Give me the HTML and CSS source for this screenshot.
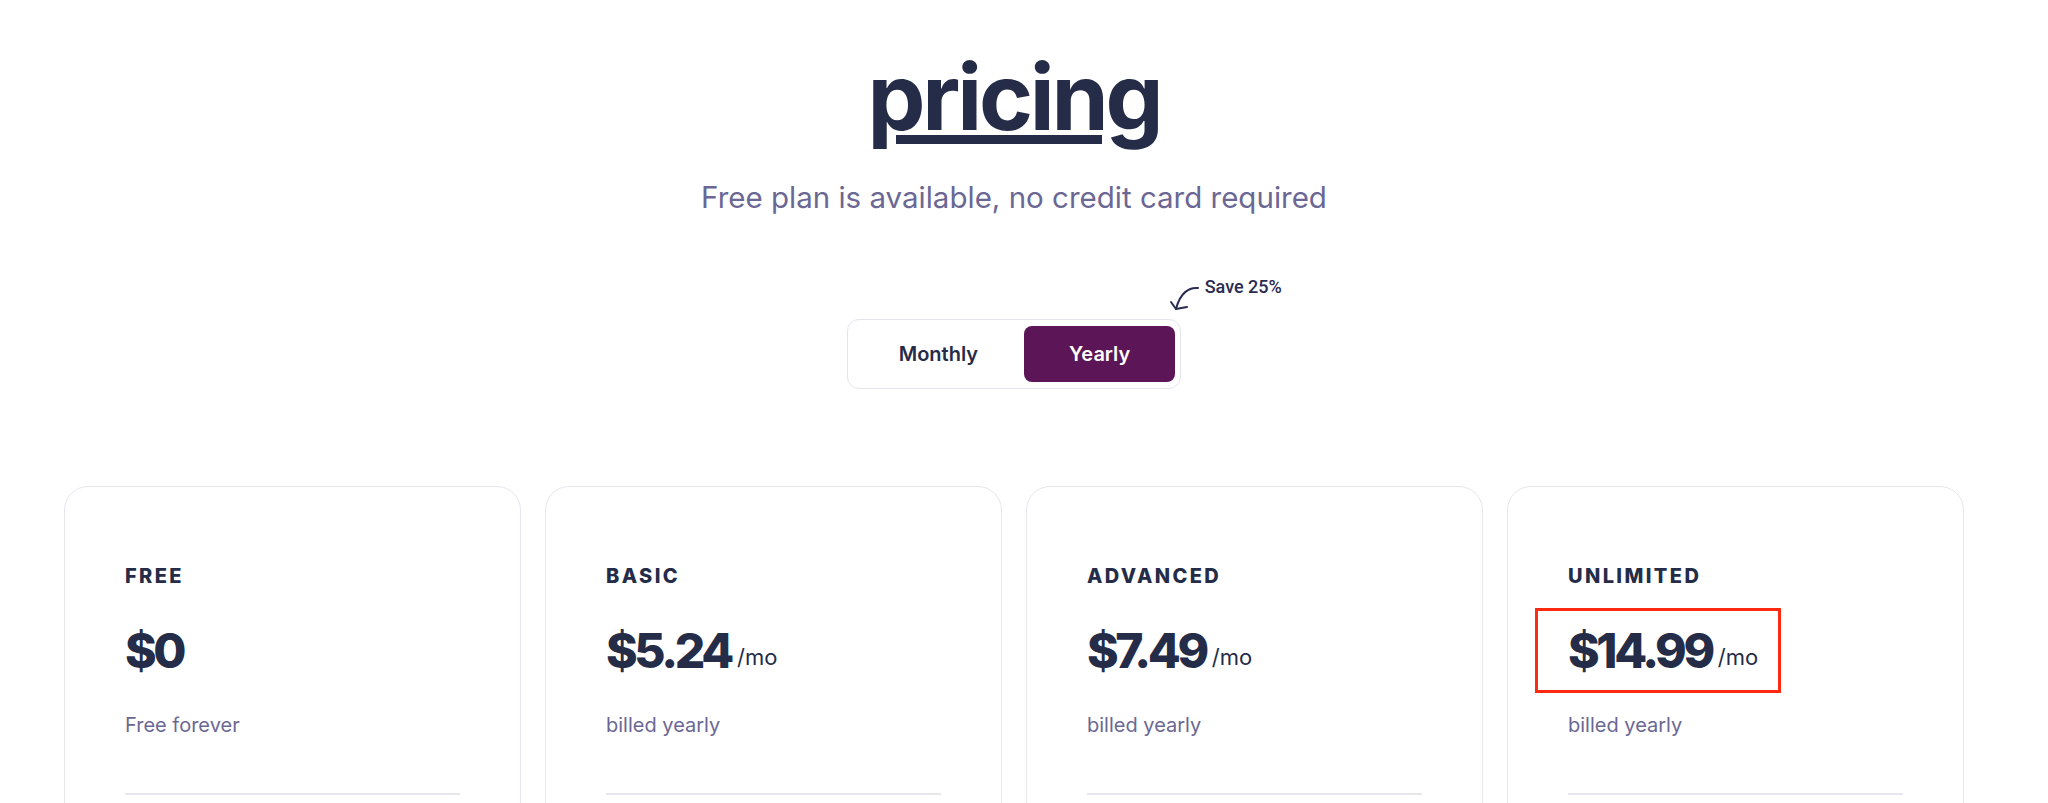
FILE: index.html
```html
<!DOCTYPE html>
<html lang="en">
<head>
<meta charset="utf-8">
<title>Pricing</title>
<link rel="stylesheet" href="styles.css">
</head>
<body>
<main class="page">
  <header class="hero">
    <h1 class="title">pricing</h1>
    <p class="subtitle">Free plan is available, no credit card required</p>
  </header>

  <div class="toggle-row">
    <div class="toggle">
      <button class="toggle-btn">Monthly</button>
      <button class="toggle-btn active">Yearly</button>
      <div class="save-note">
        <svg class="save-arrow" width="36" height="32" viewBox="0 0 36 32" fill="none" stroke="#2a2c52" stroke-width="2" stroke-linecap="round" stroke-linejoin="round">
          <path d="M31 5 C22 4 13 10 9 26"/>
          <path d="M4 19 L9 26 L20 24"/>
        </svg>
        <span class="save-text">Save 25%</span>
      </div>
    </div>
  </div>

  <section class="plans">
    <article class="plan">
      <h2 class="plan-name">FREE</h2>
      <div class="price"><span class="amount">$0</span></div>
      <p class="billing">Free forever</p>
      <hr class="divider">
    </article>
    <article class="plan">
      <h2 class="plan-name">BASIC</h2>
      <div class="price"><span class="amount">$5.24</span><span class="per">/mo</span></div>
      <p class="billing">billed yearly</p>
      <hr class="divider">
    </article>
    <article class="plan">
      <h2 class="plan-name">ADVANCED</h2>
      <div class="price"><span class="amount">$7.49</span><span class="per">/mo</span></div>
      <p class="billing">billed yearly</p>
      <hr class="divider">
    </article>
    <article class="plan">
      <h2 class="plan-name">UNLIMITED</h2>
      <div class="price"><span class="amount">$14.99</span><span class="per">/mo</span><span class="highlight"></span></div>
      <p class="billing">billed yearly</p>
      <hr class="divider">
    </article>
  </section>
</main>
</body>
</html>
```

FILE: styles.css
```css
* { box-sizing: border-box; }

html, body {
  margin: 0;
  padding: 0;
  background: #ffffff;
  overflow: hidden;
}

body {
  font-family: Inter, "Noto Sans", sans-serif;
  color: #262c48;
}

.page {
  width: 1900px;
  margin-left: 64px;
  padding-top: 51px;
}

.hero {
  display: flex;
  flex-direction: column;
  align-items: center;
}

.title {
  margin: 0;
  font-size: 92px;
  line-height: 1;
  font-weight: 700;
  letter-spacing: -0.035em;
  color: #252c48;
  text-decoration: underline;
  text-decoration-thickness: 9px;
  text-underline-offset: 5px;
  text-decoration-skip-ink: auto;
}

.subtitle {
  margin: 37px 0 0;
  font-size: 29.5px;
  line-height: 1.2;
  font-weight: 400;
  color: #6b6794;
}

.toggle-row {
  display: flex;
  justify-content: center;
  margin-top: 104px;
}

.toggle {
  position: relative;
  display: flex;
  padding: 6px 5px;
  border: 1px solid #e4e4ee;
  border-radius: 12px;
  background: #fff;
}

.toggle-btn {
  height: 56px;
  padding: 0 46px;
  border: 0;
  border-radius: 8px;
  background: transparent;
  font-family: Inter, sans-serif;
  font-size: 20px;
  font-weight: 600;
  color: #262c48;
}

.toggle-btn.active {
  padding: 0 45px;
  background: #5c1557;
  color: #ffffff;
}

.save-note {
  position: absolute;
  left: 319px;
  top: -45px;
  display: flex;
  align-items: flex-start;
}

.save-arrow {
  margin-top: 8px;
  display: block;
}

.save-text {
  margin-left: 2px;
  font-family: Roboto, sans-serif;
  font-size: 18px;
  font-weight: 500;
  line-height: 24px;
  color: #2a2c52;
  white-space: nowrap;
}

.plans {
  display: grid;
  grid-template-columns: repeat(4, 1fr);
  gap: 24px;
  margin-top: 97px;
}

.plan {
  height: 420px;
  padding: 77px 60px 0;
  border: 1px solid #e6e6ef;
  border-radius: 24px;
  background: #fff;
}

.plan-name {
  margin: 0;
  font-size: 20px;
  line-height: 1.2;
  font-weight: 800;
  letter-spacing: 0.12em;
  color: #252c48;
}

.price {
  position: relative;
  margin-top: 34px;
  line-height: 1.2;
  white-space: nowrap;
}

.amount {
  font-size: 48px;
  font-weight: 800;
  letter-spacing: -0.07em;
  color: #252c48;
}

.per {
  margin-left: 6px;
  font-size: 22px;
  font-weight: 400;
  vertical-align: 3px;
  color: #252c48;
}

.highlight {
  position: absolute;
  left: -33px;
  top: -14px;
  width: 246px;
  height: 85px;
  border: 3px solid #ff2a10;
}

.billing {
  margin: 33px 0 0;
  font-size: 20px;
  line-height: 1.2;
  color: #6b6794;
}

.divider {
  margin: 56px 0 0;
  border: 0;
  height: 2px;
  background: #e6e6ef;
}
```
